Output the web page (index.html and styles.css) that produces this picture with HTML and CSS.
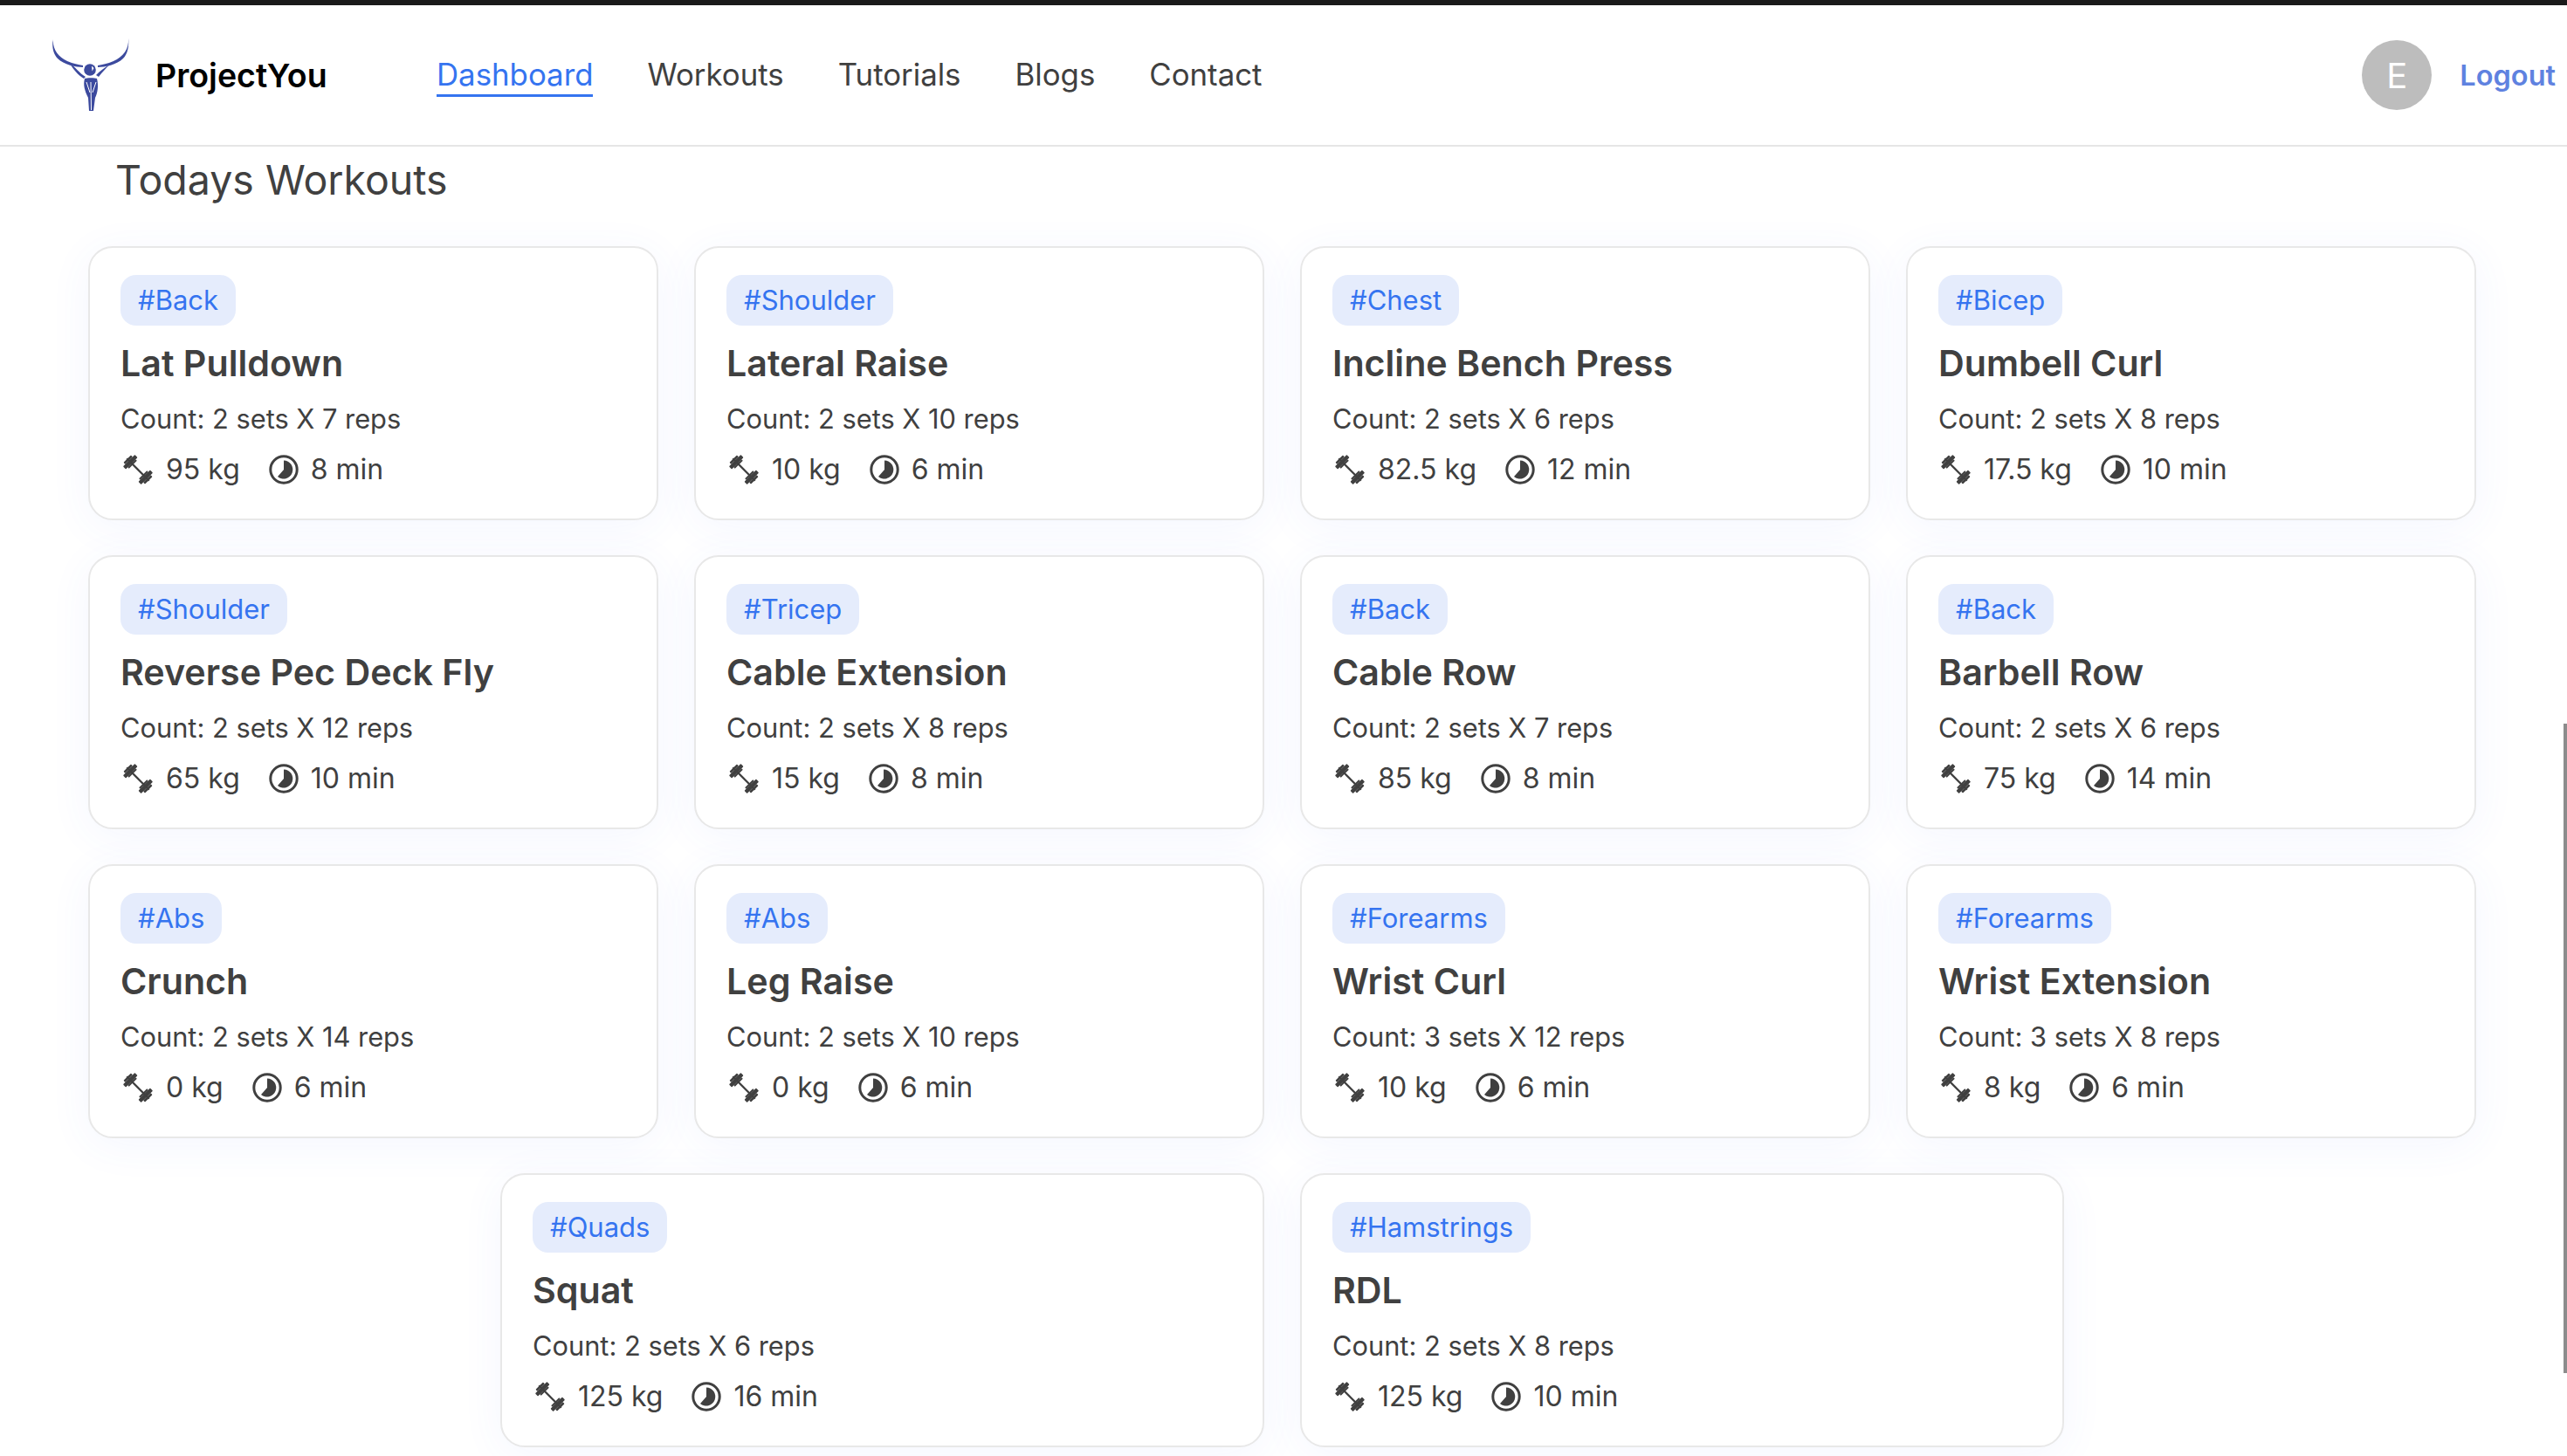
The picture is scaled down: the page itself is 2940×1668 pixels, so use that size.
FILE: index.html
```html
<!DOCTYPE html>
<html lang="en">
<head>
    <meta charset="UTF-8">
    <meta name="viewport" content="width=device-width, initial-scale=1.0">
    <title>ProjectYou</title>
    <link rel="stylesheet" href="styles.css">
</head>
<body>
    <svg class="defs" width="0" height="0">
        <symbol id="barbell" viewBox="0 0 38 38">
            <g transform="rotate(45 19 19)" fill="#404040">
                <rect x="1" y="17.8" width="36" height="2.4"/>
                <rect x="1.6" y="13" width="2.8" height="12" rx="0.8"/>
                <rect x="4.4" y="9.5" width="4.4" height="19" rx="0.8"/>
                <rect x="8.8" y="12.5" width="2.2" height="13" rx="0.8"/>
                <rect x="33.6" y="13" width="2.8" height="12" rx="0.8"/>
                <rect x="29.2" y="9.5" width="4.4" height="19" rx="0.8"/>
                <rect x="27" y="12.5" width="2.2" height="13" rx="0.8"/>
            </g>
        </symbol>
        <symbol id="clock" viewBox="0 0 36 36">
            <circle cx="18" cy="18" r="15.2" fill="none" stroke="#404040" stroke-width="3"/>
            <path d="M18 7.5A10.5 10.5 0 1 1 11 26L18 18Z" fill="#404040"/>
        </symbol>
    </svg>

    <header class="topbar">
        <div class="brand">
            <svg class="logo" viewBox="0 0 88 84" width="88" height="84">
                <g fill="#3c4a9e">
                    <path d="M1 1C0 12 6 21 17 26C24 29 30 30 35 31L35 33C27 33 13 30 6 23C1 18-1 9 1 1Z"/>
                    <path d="M87 0C88 12 81 21 70 26C63 29 57 30 52 31L52 33C60 33 74 30 81 23C86 18 88 9 87 0Z"/>
                    <path d="M20 29C26 32 31 40 38 44L36 46C29 42 24 35 20 29Z"/>
                    <path d="M67 29C62 33 57 39 53 44L50 42C54 38 60 33 67 29Z"/>
                    <circle cx="43" cy="36" r="6.8"/>
                    <path d="M37 46C39 45 49 45 51 46C53 54 52 62 49 68L47 83L42 83L41 68C37 60 35 53 37 46Z"/>
                </g>
                <path d="M45 31.5L47.5 34L45.5 37.5Z" fill="#fff"/>
                <path d="M44 50L44.5 82M39 50L43 62M50 50L46 62" stroke="#fff" stroke-width="1" fill="none"/>
            </svg>
            <span class="brand-name">ProjectYou</span>
        </div>
        <nav class="nav">
            <a class="nav-link active">Dashboard</a>
            <a class="nav-link">Workouts</a>
            <a class="nav-link">Tutorials</a>
            <a class="nav-link">Blogs</a>
            <a class="nav-link">Contact</a>
        </nav>
        <div class="user">
            <div class="avatar">E</div>
            <a class="logout">Logout</a>
        </div>
    </header>

    <main class="content">
        <h2 class="page-title">Todays Workouts</h2>

        <div class="grid">
            <div class="card">
                <span class="tag">#Back</span>
                <h3 class="card-title">Lat Pulldown</h3>
                <p class="count">Count: 2 sets X 7 reps</p>
                <div class="meta"><svg class="ico"><use href="#barbell"/></svg><span>95 kg</span><svg class="ico clock"><use href="#clock"/></svg><span>8 min</span></div>
            </div>
            <div class="card">
                <span class="tag">#Shoulder</span>
                <h3 class="card-title">Lateral Raise</h3>
                <p class="count">Count: 2 sets X 10 reps</p>
                <div class="meta"><svg class="ico"><use href="#barbell"/></svg><span>10 kg</span><svg class="ico clock"><use href="#clock"/></svg><span>6 min</span></div>
            </div>
            <div class="card">
                <span class="tag">#Chest</span>
                <h3 class="card-title">Incline Bench Press</h3>
                <p class="count">Count: 2 sets X 6 reps</p>
                <div class="meta"><svg class="ico"><use href="#barbell"/></svg><span>82.5 kg</span><svg class="ico clock"><use href="#clock"/></svg><span>12 min</span></div>
            </div>
            <div class="card">
                <span class="tag">#Bicep</span>
                <h3 class="card-title">Dumbell Curl</h3>
                <p class="count">Count: 2 sets X 8 reps</p>
                <div class="meta"><svg class="ico"><use href="#barbell"/></svg><span>17.5 kg</span><svg class="ico clock"><use href="#clock"/></svg><span>10 min</span></div>
            </div>
            <div class="card">
                <span class="tag">#Shoulder</span>
                <h3 class="card-title">Reverse Pec Deck Fly</h3>
                <p class="count">Count: 2 sets X 12 reps</p>
                <div class="meta"><svg class="ico"><use href="#barbell"/></svg><span>65 kg</span><svg class="ico clock"><use href="#clock"/></svg><span>10 min</span></div>
            </div>
            <div class="card">
                <span class="tag">#Tricep</span>
                <h3 class="card-title">Cable Extension</h3>
                <p class="count">Count: 2 sets X 8 reps</p>
                <div class="meta"><svg class="ico"><use href="#barbell"/></svg><span>15 kg</span><svg class="ico clock"><use href="#clock"/></svg><span>8 min</span></div>
            </div>
            <div class="card">
                <span class="tag">#Back</span>
                <h3 class="card-title">Cable Row</h3>
                <p class="count">Count: 2 sets X 7 reps</p>
                <div class="meta"><svg class="ico"><use href="#barbell"/></svg><span>85 kg</span><svg class="ico clock"><use href="#clock"/></svg><span>8 min</span></div>
            </div>
            <div class="card">
                <span class="tag">#Back</span>
                <h3 class="card-title">Barbell Row</h3>
                <p class="count">Count: 2 sets X 6 reps</p>
                <div class="meta"><svg class="ico"><use href="#barbell"/></svg><span>75 kg</span><svg class="ico clock"><use href="#clock"/></svg><span>14 min</span></div>
            </div>
            <div class="card">
                <span class="tag">#Abs</span>
                <h3 class="card-title">Crunch</h3>
                <p class="count">Count: 2 sets X 14 reps</p>
                <div class="meta"><svg class="ico"><use href="#barbell"/></svg><span>0 kg</span><svg class="ico clock"><use href="#clock"/></svg><span>6 min</span></div>
            </div>
            <div class="card">
                <span class="tag">#Abs</span>
                <h3 class="card-title">Leg Raise</h3>
                <p class="count">Count: 2 sets X 10 reps</p>
                <div class="meta"><svg class="ico"><use href="#barbell"/></svg><span>0 kg</span><svg class="ico clock"><use href="#clock"/></svg><span>6 min</span></div>
            </div>
            <div class="card">
                <span class="tag">#Forearms</span>
                <h3 class="card-title">Wrist Curl</h3>
                <p class="count">Count: 3 sets X 12 reps</p>
                <div class="meta"><svg class="ico"><use href="#barbell"/></svg><span>10 kg</span><svg class="ico clock"><use href="#clock"/></svg><span>6 min</span></div>
            </div>
            <div class="card">
                <span class="tag">#Forearms</span>
                <h3 class="card-title">Wrist Extension</h3>
                <p class="count">Count: 3 sets X 8 reps</p>
                <div class="meta"><svg class="ico"><use href="#barbell"/></svg><span>8 kg</span><svg class="ico clock"><use href="#clock"/></svg><span>6 min</span></div>
            </div>
        </div>

        <div class="last-row">
            <div class="card wide">
                <span class="tag">#Quads</span>
                <h3 class="card-title">Squat</h3>
                <p class="count">Count: 2 sets X 6 reps</p>
                <div class="meta"><svg class="ico"><use href="#barbell"/></svg><span>125 kg</span><svg class="ico clock"><use href="#clock"/></svg><span>16 min</span></div>
            </div>
            <div class="card wide">
                <span class="tag">#Hamstrings</span>
                <h3 class="card-title">RDL</h3>
                <p class="count">Count: 2 sets X 8 reps</p>
                <div class="meta"><svg class="ico"><use href="#barbell"/></svg><span>125 kg</span><svg class="ico clock"><use href="#clock"/></svg><span>10 min</span></div>
            </div>
        </div>
    </main>

    <div class="scroll-thumb"></div>
</body>
</html>
```

FILE: styles.css
```css
* {
    box-sizing: border-box;
}

html, body {
    height: 100%;
}

body {
    margin: 0;
    background: #fff;
    color: #404040;
    font-family: Inter, "Liberation Sans", sans-serif;
    overflow: hidden;
}

.defs {
    position: absolute;
}

.topbar {
    display: flex;
    align-items: center;
    height: 168px;
    padding: 0 13px 0 60px;
    border-top: 6px solid #1a1a1a;
    border-bottom: 2px solid #e6e6e6;
}

.brand {
    display: flex;
    align-items: center;
    gap: 30px;
    width: 440px;
}

.logo {
    flex: none;
}

.brand-name {
    font-size: 37.5px;
    font-weight: 600;
    color: #000;
}

.nav {
    display: flex;
    gap: 62px;
    font-size: 34.8px;
    line-height: 42px;
}

.nav-link {
    padding-top: 3px;
    padding-bottom: 2px;
    border-bottom: 3px solid transparent;
}

.nav-link.active {
    color: #3574f0;
    border-bottom-color: #3574f0;
}

.user {
    display: flex;
    align-items: center;
    gap: 32px;
    margin-left: auto;
}

.avatar {
    display: flex;
    align-items: center;
    justify-content: center;
    width: 80px;
    height: 80px;
    border-radius: 50%;
    background: #bdbdbd;
    color: #fff;
    font-size: 40px;
}

.logout {
    color: #5f82e0;
    font-size: 32.5px;
    font-weight: 600;
}

.content {
    padding: 0 104px 0 101px;
}

.page-title {
    margin: 0;
    padding: 13px 0 0 31px;
    height: 114px;
    font-size: 46.5px;
    line-height: 50px;
    font-weight: 400;
}

.grid {
    display: grid;
    grid-template-columns: repeat(4, 653px);
    gap: 40px 41px;
}

.last-row {
    display: flex;
    justify-content: center;
    gap: 41px;
    margin-top: 40px;
}

.card {
    display: flex;
    flex-direction: column;
    align-items: flex-start;
    height: 314px;
    padding: 31px 35px 0;
    background: #fff;
    border: 2px solid #e8e8e8;
    border-radius: 28px;
    box-shadow: 0 8px 50px rgba(70, 110, 255, 0.06);
}

.card.wide {
    width: 875px;
}

.tag {
    height: 58px;
    padding: 0 20px;
    border-radius: 18px;
    background: #e5ecfc;
    color: #3574f0;
    font-size: 31px;
    line-height: 58px;
}

.card-title {
    margin: 18px 0 0;
    font-size: 41.2px;
    line-height: 50px;
    font-weight: 600;
}

.count {
    margin: 17px 0 0;
    font-size: 30.8px;
    line-height: 44px;
}

.meta {
    display: flex;
    align-items: center;
    margin-top: 14px;
    font-size: 32px;
    line-height: 44px;
}

.ico {
    flex: none;
    width: 38px;
    height: 38px;
    margin-left: 1px;
    margin-right: 13px;
}

.clock {
    width: 36px;
    height: 36px;
    margin-left: 32px;
    margin-right: 13px;
}

.scroll-thumb {
    position: absolute;
    top: 829px;
    right: 0;
    width: 4px;
    height: 744px;
    background: #8c8c8c;
}
```
